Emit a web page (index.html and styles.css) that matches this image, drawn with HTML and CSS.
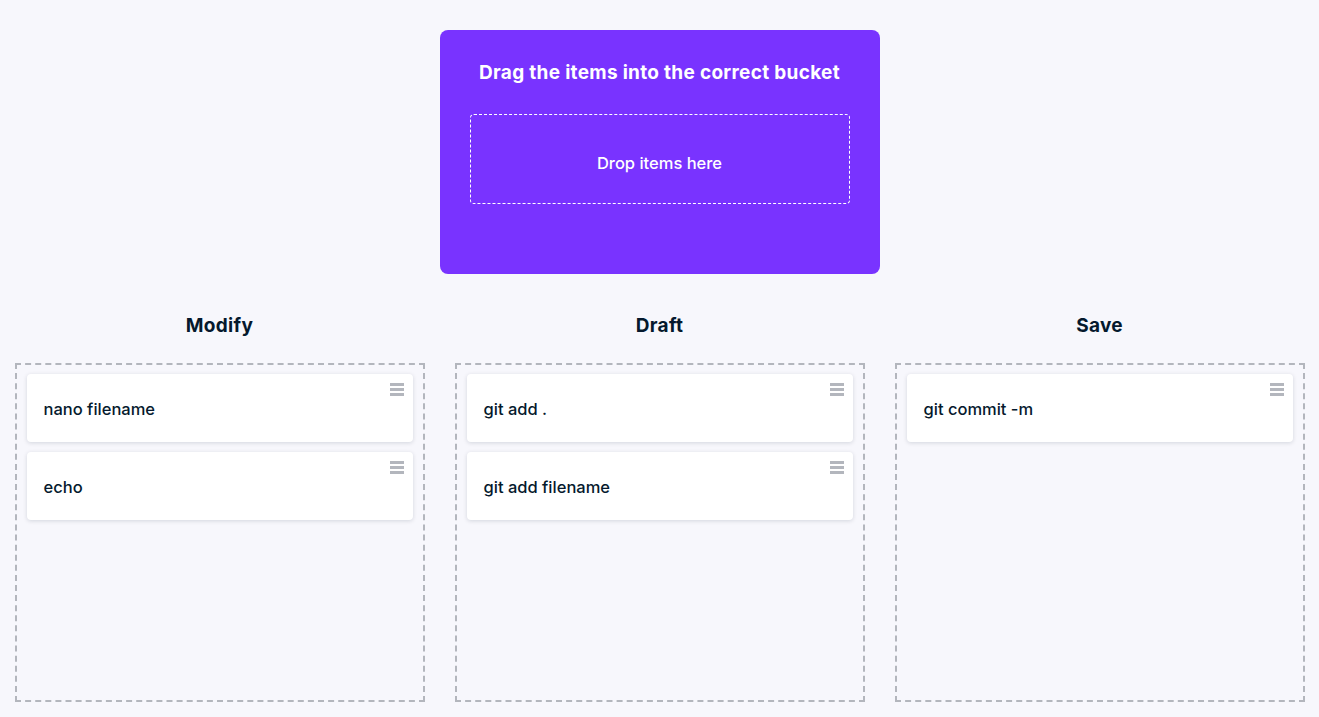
FILE: index.html
```html
<!DOCTYPE html>
<html>
<head>
<meta charset="utf-8">
<link rel="stylesheet" href="styles.css">
</head>
<body>
<div class="page">
  <div class="prompt">
    <h1 class="prompt-title">Drag the items into the correct bucket</h1>
    <div class="dropzone">Drop items here</div>
  </div>
  <div class="columns">
    <div class="column">
      <h2 class="col-title">Modify</h2>
      <div class="bucket">
        <div class="item"><span>nano filename</span><span class="grip"><i></i><i></i><i></i></span></div>
        <div class="item"><span>echo</span><span class="grip"><i></i><i></i><i></i></span></div>
      </div>
    </div>
    <div class="column">
      <h2 class="col-title">Draft</h2>
      <div class="bucket">
        <div class="item"><span>git add .</span><span class="grip"><i></i><i></i><i></i></span></div>
        <div class="item"><span>git add filename</span><span class="grip"><i></i><i></i><i></i></span></div>
      </div>
    </div>
    <div class="column">
      <h2 class="col-title">Save</h2>
      <div class="bucket">
        <div class="item"><span>git commit -m</span><span class="grip"><i></i><i></i><i></i></span></div>
      </div>
    </div>
  </div>
</div>
</body>
</html>
```
FILE: styles.css
```css
* { box-sizing: border-box; }
html, body { margin: 0; padding: 0; }
body {
  background: #f7f7fc;
  font-family: "Inter", "Open Sans", sans-serif;
  color: #05192d;
}
.page {
  padding-top: 30px;
  display: flex;
  flex-direction: column;
  align-items: center;
}
.prompt {
  width: 440px;
  height: 244px;
  background: #7933ff;
  border-radius: 8px;
  padding: 31px 30px 0;
  display: flex;
  flex-direction: column;
  align-items: center;
}
.prompt-title {
  margin: 0;
  color: #fff;
  font-size: 19px;
  font-weight: 700;
  line-height: 24px;
  letter-spacing: 0.3px;
  white-space: nowrap;
}
.dropzone {
  margin-top: 29px;
  width: 380px;
  height: 90px;
  border: 1px dashed #fff;
  border-radius: 4px;
  padding-top: 8px;
  display: flex;
  align-items: center;
  justify-content: center;
  color: #fff;
  font-size: 16.5px;
  font-weight: 500;
}
.columns {
  margin-top: 39px;
  display: flex;
  gap: 30px;
  justify-content: center;
}
.column {
  width: 410px;
  display: flex;
  flex-direction: column;
}
.col-title {
  margin: 1px 0 25px;
  text-align: center;
  font-size: 19px;
  font-weight: 700;
  line-height: 24px;
  letter-spacing: 0.3px;
}
.bucket {
  height: 339px;
  border: 2px dashed #b3b6bd;
  padding: 9px 10px;
  display: flex;
  flex-direction: column;
  gap: 10px;
}
.item {
  height: 68px;
  background: #fff;
  border-radius: 4px;
  box-shadow: 0 1px 4px rgba(5, 25, 45, 0.15);
  padding: 2px 17px 0;
  display: flex;
  align-items: center;
  font-size: 16.5px;
  font-weight: 500;
  position: relative;
}
.grip {
  position: absolute;
  top: 9px;
  right: 9px;
  width: 14px;
  display: flex;
  flex-direction: column;
  gap: 2px;
}
.grip i {
  display: block;
  height: 3px;
  background: #b3b6bd;
}
```
